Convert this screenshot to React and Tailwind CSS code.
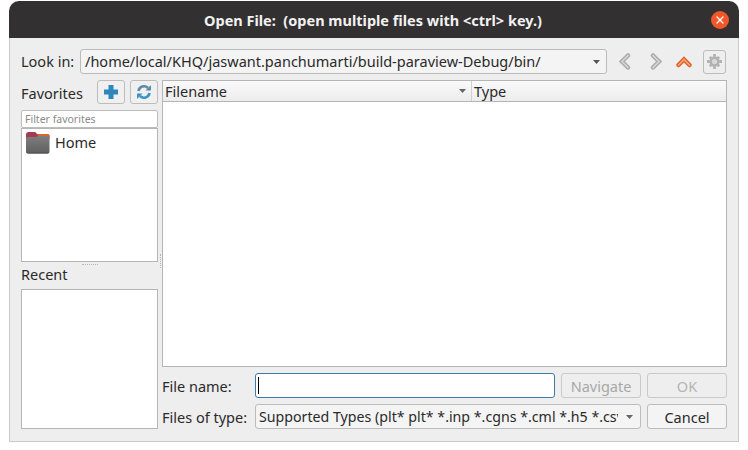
import { X } from "lucide-react";

function Caret({ className }) {
  return (
    <svg width="7" height="4" viewBox="0 0 7 4" className={className}>
      <path d="M0 0h7L3.500 4z" fill="currentColor" />
    </svg>
  );
}

function FolderIcon() {
  return (
    <svg width="25" height="23" viewBox="0 0 25 23" className="shrink-0">
      <defs>
        <linearGradient id="folderBody" x1="0" y1="0" x2="0" y2="1">
          <stop offset="0" stopColor="#7d7d7d" />
          <stop offset="1" stopColor="#606060" />
        </linearGradient>
      </defs>
      <path d="M1 3.500C1 2 2 1 3.500 1h6c1 0 1.500.5 2 1.500L12 3h10.500C24 3 24.500 4 24.500 5v3H1z" fill="#a33b55" />
      <path d="M12 3h10.500C24 3 24.500 4 24.500 5v1H14z" fill="#d9662f" />
      <path d="M1 8c0-1 .5-2 2-2h7.500c1 0 1.500-.5 2-1h10c1.200 0 2 .8 2 2v13.500c0 1.200-.8 2-2 2H3c-1.200 0-2-.8-2-2z" fill="url(#folderBody)" />
      <path d="M1 20.500c0 1.200.8 2 2 2h19.500c1.200 0 2-.8 2-2V21.500H1z" fill="#4e4e4e" />
    </svg>
  );
}

// beveled chevron used by the back / forward / up buttons
function Chevron({ points, outer, inner, w = 12, h = 17 }) {
  return (
    <svg width={w} height={h} viewBox={`0 0 ${w} ${h}`} className="shrink-0">
      <polyline points={points} fill="none" stroke={outer} strokeWidth="4.500" strokeLinecap="round" strokeLinejoin="miter" />
      <polyline points={points} fill="none" stroke={inner} strokeWidth="1.500" strokeLinecap="round" strokeLinejoin="miter" />
    </svg>
  );
}

function GearIcon() {
  return (
    <svg width="15" height="15" viewBox="0 0 16 16">
      <circle cx="8" cy="8" r="5.500" fill="#b2b2b2" />
      <path d="M6.500 0h3v3h-3zM6.500 13h3v3h-3zM0 6.500h3v3H0zM13 6.500h3v3h-3zM2 4l2-2 2 2-2 2zM10 4l2-2 2 2-2 2zM2 12l2-2 2 2-2 2zM10 12l2-2 2 2-2 2z" fill="#b2b2b2" />
      <circle cx="8" cy="8" r="2.800" fill="#d8d8d8" />
    </svg>
  );
}

function PlusIcon() {
  return (
    <svg width="14" height="14" viewBox="0 0 14 14">
      <path d="M4.500 0h5v4.500H14v5H9.500V14h-5V9.500H0v-5h4.500z" fill="#2f86bb" />
    </svg>
  );
}

function RefreshIcon() {
  return (
    <svg width="16" height="16" viewBox="0 0 16 16">
      <path d="M2.500 7a5.600 5.600 0 0 1 9.500-3" fill="none" stroke="#5d8aa5" strokeWidth="2.600" />
      <path d="M9.500 6.500h5.500V1z" fill="#5d8aa5" />
      <path d="M13.500 9a5.600 5.600 0 0 1-9.500 3" fill="none" stroke="#3b93c6" strokeWidth="2.600" />
      <path d="M6.500 9.500H1V15z" fill="#3b93c6" />
    </svg>
  );
}

function ToolButton({ children }) {
  return (
    <button className="w-[28px] h-[24px] flex items-center justify-center rounded-[3px] border border-[#bcbcbc] bg-[#f0f0f0]">
      {children}
    </button>
  );
}

export default function App() {
  return (
    <div className="w-[748px] h-[450px] bg-white pl-[9px] pt-px font-['Noto_Sans',sans-serif] text-[14.5px] leading-[18px] text-[#2a2a2a]">
      <div className="w-[730px]">
        {/* Title bar */}
        <div className="h-[37px] bg-[#323030] rounded-t-[10px] flex items-center pl-[195px] pr-[10px]">
          <span className="flex-1 font-bold text-[#f2f2f2] whitespace-pre">Open File:  (open multiple files with &lt;ctrl&gt; key.)</span>
          <div className="w-[18px] h-[18px] rounded-full bg-[#f0582a] flex items-center justify-center">
            <X size={12} strokeWidth={2.500} color="#ffffff" />
          </div>
        </div>

        {/* Dialog body */}
        <div className="h-[404px] bg-[#eeeeee] border border-t-0 border-[#c9c9c9] pt-[11px] pl-[11px] pr-[10px] flex flex-col">
          {/* Look in row */}
          <div className="h-[25px] flex items-center">
            <span className="w-[59px] shrink-0 pb-[2px]">Look in:</span>
            <div className="w-[527px] h-[25px] flex items-center justify-between rounded-[3px] border border-[#bcbcbc] bg-[#f4f4f4] pl-[4px] pr-[6px]">
              <span className="pb-[2px]">/home/local/KHQ/jaswant.panchumarti/build-paraview-Debug/bin/</span>
              <Caret className="text-[#555555]" />
            </div>
            <div className="flex items-center pl-[12px]">
              <Chevron points="9,2.500 3,8.500 9,14.500" outer="#adadad" inner="#d6d6d6" />
              <div className="w-[19px]"></div>
              <Chevron points="3,2.500 9,8.500 3,14.500" outer="#adadad" inner="#d6d6d6" />
              <div className="w-[14px]"></div>
              <Chevron points="2.500,9 8,3.500 13.500,9" outer="#e0642f" inner="#f5a678" w={16} h={12} />
              <div className="w-[11px]"></div>
              <div className="w-[23px] h-[24px] flex items-center justify-center rounded-[3px] border border-[#bcbcbc]">
                <GearIcon />
              </div>
            </div>
          </div>

          <div className="mt-[6px] flex flex-1 min-h-0">
            {/* Left column */}
            <div className="w-[137px] shrink-0 flex flex-col">
              <div className="h-[24px] flex items-center">
                <span className="flex-1 pt-px">Favorites</span>
                <div className="flex gap-[5px]">
                  <ToolButton><PlusIcon /></ToolButton>
                  <ToolButton><RefreshIcon /></ToolButton>
                </div>
              </div>
              <div className="mt-[6px] h-[18px] flex items-center rounded-[2px] border border-[#bcbcbc] bg-white px-[3px] text-[10.500px] text-[#8a8a8a]">
                Filter favorites
              </div>
              <div className="h-[134px] border border-[#b5b5b5] bg-white pl-[3px] pt-[2px] flex items-start gap-[5px]">
                <FolderIcon />
                <span className="leading-[22px]">Home</span>
              </div>
              <div className="h-[4px] flex items-center justify-center">
                <div className="w-[16px] border-t border-dotted border-[#b5b5b5]"></div>
              </div>
              <div className="h-[23px] leading-[16px]">Recent</div>
              <div className="h-[140px] border border-[#b5b5b5] bg-white"></div>
            </div>

            {/* Splitter handle */}
            <div className="w-[4px] shrink-0 flex items-center justify-center">
              <div className="h-[14px] border-l border-dotted border-[#b5b5b5]"></div>
            </div>

            {/* Right column */}
            <div className="w-[565px] flex flex-col">
              <div className="h-[287px] border border-[#b5b5b5] bg-white flex flex-col">
                <div className="h-[21px] border-b border-[#b5b5b5] bg-gradient-to-b from-[#fafafa] to-[#ececec] flex items-center">
                  <div className="w-[309px] h-full flex items-center justify-between pl-[2px] pr-[5px] border-r border-[#cfcfcf]">
                    <span className="pb-px">Filename</span>
                    <Caret className="text-[#666666]" />
                  </div>
                  <span className="pl-[2px] pb-px">Type</span>
                </div>
              </div>
              <div className="mt-[6px] h-[25px] flex items-center">
                <span className="w-[93px] shrink-0">File name:</span>
                <div className="w-[300px] h-[25px] flex items-center pl-[2px] rounded-[3px] border border-[#3b7ba8] bg-white">
                  <div className="w-px h-[17px] bg-black"></div>
                </div>
                <button className="ml-[6px] w-[80px] h-[25px] rounded-[3px] border border-[#c9c9c9] text-[#a8a8a8]">Navigate</button>
                <button className="ml-[6px] w-[80px] h-[25px] rounded-[3px] border border-[#c9c9c9] text-[#b5b5b5]">OK</button>
              </div>
              <div className="mt-[6px] h-[25px] flex items-center">
                <span className="w-[93px] shrink-0">Files of type:</span>
                <div className="w-[386px] h-[25px] flex items-center rounded-[3px] border border-[#bcbcbc] bg-[#f4f4f4] pl-[3px] pr-[7px]">
                  <span className="flex-1 min-w-0 overflow-hidden whitespace-nowrap text-[14.200px]">Supported Types (plt* plt* *.inp *.cgns *.cml *.h5 *.csv</span>
                  <Caret className="ml-[8px] shrink-0 text-[#666666]" />
                </div>
                <button className="ml-[6px] w-[80px] h-[25px] rounded-[3px] border border-[#bcbcbc] bg-[#f4f4f4]">Cancel</button>
              </div>
            </div>
          </div>
        </div>
      </div>
    </div>
  );
}
